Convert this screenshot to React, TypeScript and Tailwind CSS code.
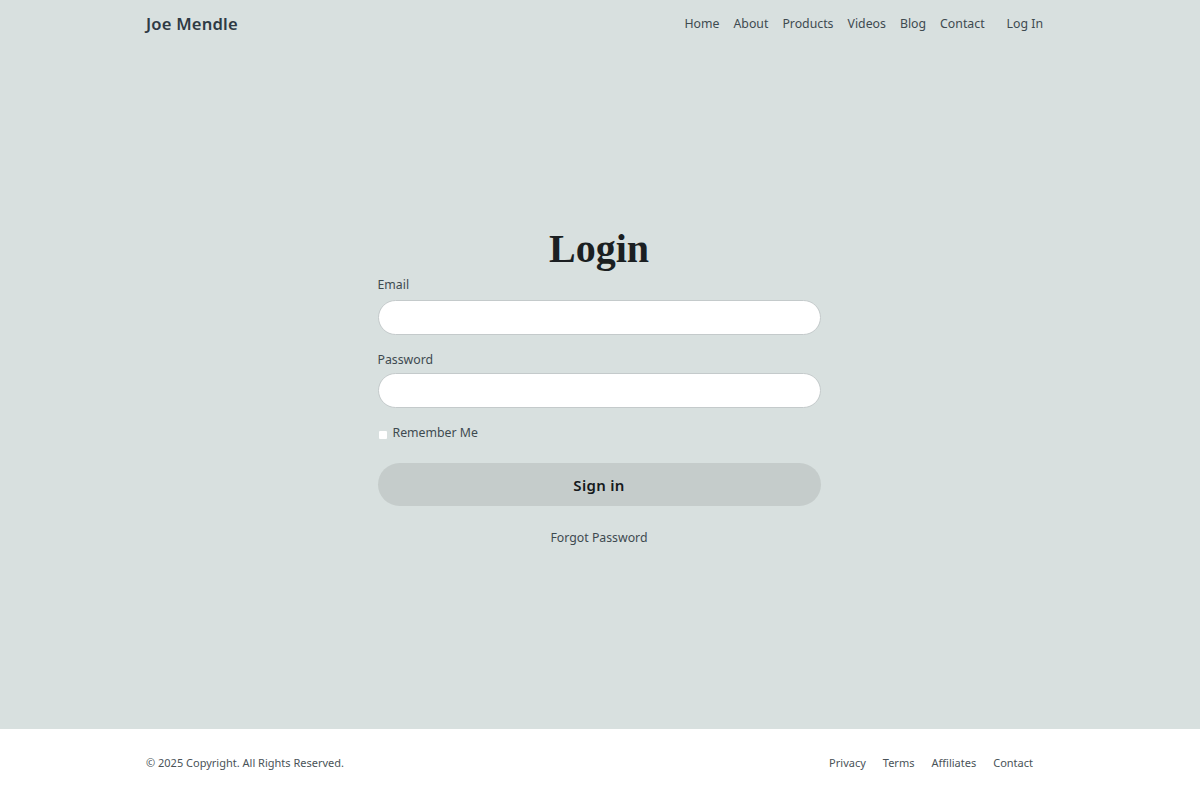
import React from 'react';

const sans = { fontFamily: '"Noto Sans", "Open Sans", sans-serif' };

const NavLink: React.FC<{ label: string }> = ({ label }) => (
  <a href="#" className="text-[12.3px] text-[#3e4a50] hover:text-black">
    {label}
  </a>
);

export default function App() {
  return (
    <div className="min-h-screen flex flex-col bg-[#d8e0df]" style={sans}>
      <header className="h-12 flex items-center">
        <div className="w-full max-w-[908px] mx-auto flex items-center justify-between">
          <a href="#" className="text-[16.6px] font-semibold text-[#2e3a44] tracking-[0.2px]">Joe Mendle</a>
          <nav className="flex items-center gap-[14px]">
            <NavLink label="Home" />
            <NavLink label="About" />
            <NavLink label="Products" />
            <NavLink label="Videos" />
            <NavLink label="Blog" />
            <NavLink label="Contact" />
            <span className="ml-[8px] mr-[11px] flex">
              <NavLink label="Log In" />
            </span>
          </nav>
        </div>
      </header>

      <main className="flex-1 flex items-center justify-center">
        <div className="w-[443px] -translate-x-px flex flex-col">
          <h1
            className="text-center text-[40px] font-bold text-[#1b1f22] leading-none mb-[7px]"
            style={{ fontFamily: '"Liberation Serif", "DejaVu Serif", serif' }}
          >
            Login
          </h1>
          <label className="text-[12.3px] text-[#3e4a50] mb-[5px]">Email</label>
          <input
            type="email"
            className="h-[35px] w-full rounded-full bg-white border border-[#c4cacb] px-4 text-sm outline-none"
          />
          <label className="text-[12.3px] text-[#3e4a50] mt-[16px] mb-[4px]">Password</label>
          <input
            type="password"
            className="h-[35px] w-full rounded-full bg-white border border-[#c4cacb] px-4 text-sm outline-none"
          />
          <label className="flex items-center mt-[16px] text-[12.3px] text-[#3e4a50]">
            <span className="w-[8px] h-[8px] bg-white rounded-[1px] mt-[3px] ml-[1px] mr-[6px] inline-block"></span>
            Remember Me
          </label>
          <button className="mt-[21px] h-[43px] w-full rounded-full bg-[#c5cccb] text-[15px] font-semibold text-[#15191c] tracking-[0.3px]">
            Sign in
          </button>
          <a href="#" className="mt-[23px] text-center text-[12.3px] text-[#3e4a50]">Forgot Password</a>
        </div>
      </main>

      <footer className="h-[69px] bg-white flex items-center">
        <div className="w-full max-w-[908px] mx-auto flex items-center justify-between">
          <p className="text-[11px] text-[#4a5358]">© 2025 Copyright. All Rights Reserved.</p>
          <div className="flex items-center gap-[17px] mr-[21px]">
            <a href="#" className="text-[11px] text-[#4a5358]">Privacy</a>
            <a href="#" className="text-[11px] text-[#4a5358]">Terms</a>
            <a href="#" className="text-[11px] text-[#4a5358]">Affiliates</a>
            <a href="#" className="text-[11px] text-[#4a5358]">Contact</a>
          </div>
        </div>
      </footer>
    </div>
  );
}
